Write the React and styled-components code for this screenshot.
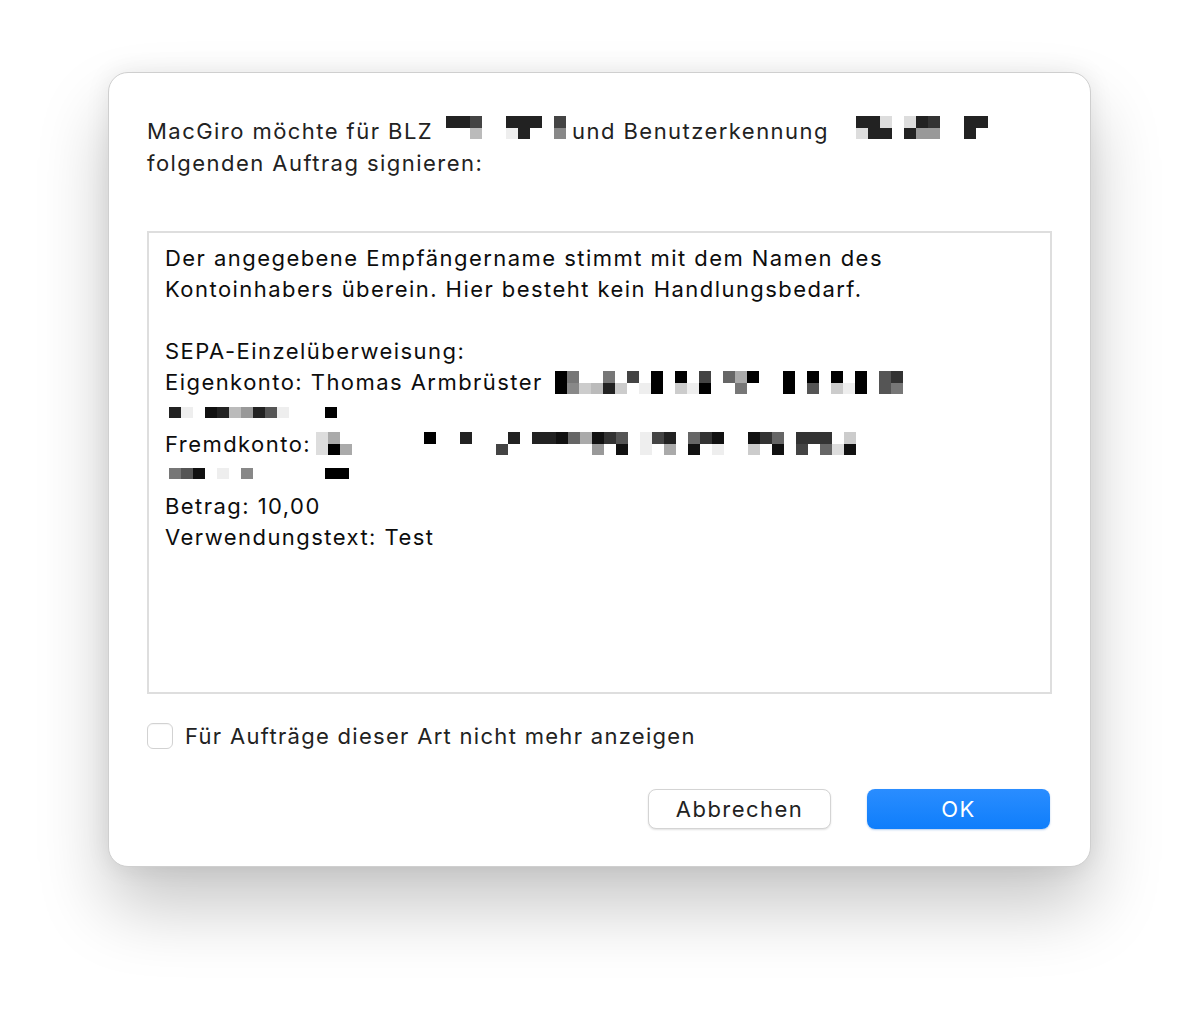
import React from "react";
import styled, { createGlobalStyle } from "styled-components";

const GlobalStyle = createGlobalStyle`
  * {
    margin: 0;
    padding: 0;
    box-sizing: border-box;
  }
  body {
    background: #ffffff;
    font-family: Inter, "Noto Sans", "Liberation Sans", sans-serif;
    letter-spacing: 1.45px;
    -webkit-font-smoothing: antialiased;
  }
`;

// pixelated redactions: one string per row, one hex digit per cell (grey level), "." = empty
const redactions = {
  blz: ["224..222.4", "..b..e2..8"],
  user: ["22d.d23..22", "d22.299..2."],
  ownA: ["07..7.4.0.0.4.6a0..0.0.0.0.53", "08cb2c.e0.ce0..7...0f5.ce0.57"],
  ownB: ["2e.12b925e...0"],
  otherA: [
    "da.......0..2...2.2216a135.e42.631..136.333.c",
    "d0a............4.......9.1.e.a.1.e..c.1.4.6d1",
  ],
  otherB: ["751.e.8......00"],
};

const Mosaic = ({ rows, drop = 0, gap = 14 }) => (
  <MosaicBox $drop={drop} $gap={gap}>
    {rows.map((row, r) => (
      <MosaicRow key={r}>
        {row.split("").map((c, i) => (
          <Cell key={i} $shade={c} />
        ))}
      </MosaicRow>
    ))}
  </MosaicBox>
);

const App = () => {
  return (
    <>
      <GlobalStyle />
      <Page>
        <Dialog>
          <Intro>
            MacGiro möchte für BLZ
            <Mosaic rows={redactions.blz} gap={13} />
            <Tight>und Benutzerkennung</Tight>
            <Mosaic rows={redactions.user} gap={27} />
            <br />
            folgenden Auftrag signieren:
          </Intro>

          <Details>
            <Line>Der angegebene Empfängername stimmt mit dem Namen des</Line>
            <Line>Kontoinhabers überein. Hier besteht kein Handlungsbedarf.</Line>
            <Line />
            <Line>SEPA-Einzelüberweisung:</Line>
            <Line>
              Eigenkonto: Thomas Armbrüster
              <Mosaic rows={redactions.ownA} drop={4} gap={12} />
            </Line>
            <Line>
              <Mosaic rows={redactions.ownB} drop={-3} gap={4} />
            </Line>
            <Line>
              Fremdkonto:
              <Mosaic rows={redactions.otherA} drop={3} gap={5} />
            </Line>
            <Line>
              <Mosaic rows={redactions.otherB} drop={-4} gap={4} />
            </Line>
            <Line>Betrag: 10,00</Line>
            <Line>Verwendungstext: Test</Line>
          </Details>

          <CheckRow>
            <CheckBox type="checkbox" />
            Für Aufträge dieser Art nicht mehr anzeigen
          </CheckRow>

          <Buttons>
            <Button>Abbrechen</Button>
            <Button $primary>OK</Button>
          </Buttons>
        </Dialog>
      </Page>
    </>
  );
};

const Page = styled.div`
  width: 1199px;
  min-height: 1010px;
  padding: 72px 0 0 108px;
`;

const Dialog = styled.div`
  width: 983px;
  height: 795px;
  background: #ffffff;
  border: 1px solid #cfcfcf;
  border-radius: 20px;
  box-shadow: 0 40px 70px rgba(0, 0, 0, 0.22), 0 0 24px rgba(0, 0, 0, 0.08);
  padding: 42px 38px 37px 38px;
  display: flex;
  flex-direction: column;
`;

const Intro = styled.p`
  font-size: 22px;
  line-height: 32px;
  color: #222222;
  white-space: nowrap;
`;

const Tight = styled.span`
  margin-left: 6px;
`;

const Details = styled.div`
  margin-top: 52px;
  height: 463px;
  border: 2px solid #dedede;
  padding: 10px 16px;
  font-size: 22px;
  line-height: 31px;
  color: #0d0d0d;
`;

const Line = styled.div`
  height: 31px;
  white-space: nowrap;
`;

const MosaicBox = styled.span`
  display: inline-block;
  margin-left: ${(p) => p.$gap}px;
  vertical-align: ${(p) => -p.$drop}px;
`;

const MosaicRow = styled.span`
  display: flex;
  height: 11.5px;
`;

const Cell = styled.span`
  width: 12px;
  flex: none;
  background: ${(p) => (p.$shade === "." ? "transparent" : `#${p.$shade.repeat(3)}`)};
`;

const CheckRow = styled.label`
  margin-top: 29px;
  display: flex;
  align-items: center;
  gap: 12px;
  font-size: 22px;
  letter-spacing: 1.3px;
  color: #222222;
  height: 26px;
`;

const CheckBox = styled.input`
  appearance: none;
  width: 26px;
  height: 26px;
  border: 1.5px solid #d2d2d2;
  border-radius: 6px;
  background: #ffffff;
  box-shadow: inset 0 1px 1px rgba(0, 0, 0, 0.04);
`;

const Buttons = styled.div`
  margin-top: auto;
  display: flex;
  justify-content: flex-end;
  gap: 36px;
  padding-right: 2px;
`;

const Button = styled.button`
  width: 183px;
  height: 40px;
  border-radius: 8px;
  font-family: inherit;
  font-size: 22px;
  letter-spacing: 1.45px;
  cursor: pointer;
  border: ${(p) => (p.$primary ? "none" : "1px solid #d4d4d4")};
  color: ${(p) => (p.$primary ? "#ffffff" : "#222222")};
  background: ${(p) => (p.$primary ? "linear-gradient(#2a8dff, #0f7efb)" : "#ffffff")};
  box-shadow: ${(p) =>
    p.$primary ? "0 1px 2px rgba(0, 90, 200, 0.3)" : "0 1px 2px rgba(0, 0, 0, 0.12)"};
`;

export default App;
